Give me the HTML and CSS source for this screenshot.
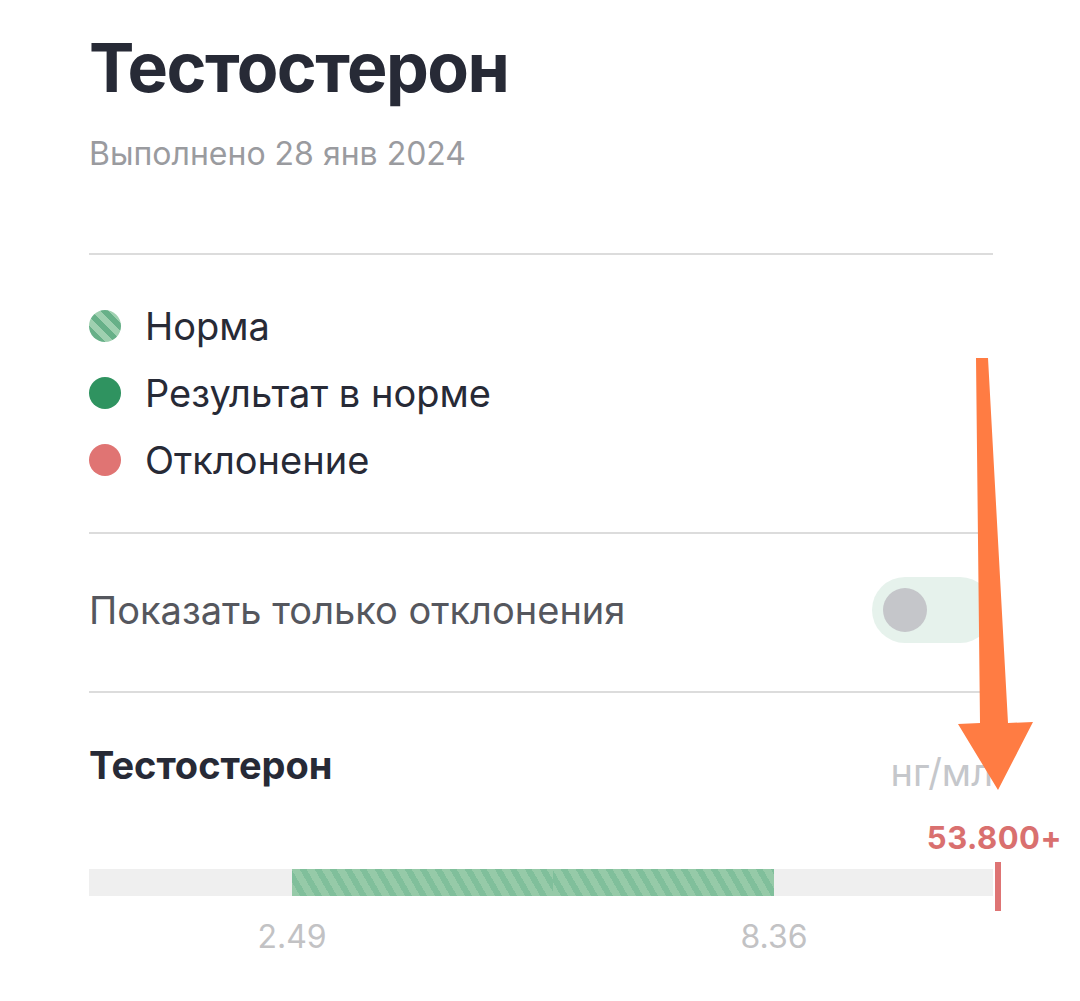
FILE: index.html
```html
<!DOCTYPE html>
<html lang="ru">
<head>
  <meta charset="UTF-8">
  <title>Тестостерон</title>
  <link rel="stylesheet" href="styles.css">
</head>
<body>
  <div class="page">
    <!-- заголовок -->
    <h1 class="title">Тестостерон</h1>
    <div class="date">Выполнено 28 янв 2024</div>

    <hr class="line">

    <!-- легенда -->
    <ul class="legend">
      <li><span class="dot dot-norm"></span>Норма</li>
      <li><span class="dot dot-ok"></span>Результат в норме</li>
      <li><span class="dot dot-bad"></span>Отклонение</li>
    </ul>

    <hr class="line">

    <!-- переключатель -->
    <div class="filter">
      <span>Показать только отклонения</span>
      <div class="switch"><div class="knob"></div></div>
    </div>

    <hr class="line">

    <!-- показатель -->
    <div class="result">
      <div class="result-head">
        <span class="result-name">Тестостерон</span>
        <span class="result-unit">нг/мл</span>
      </div>
      <div class="scale">
        <div class="value">53.800+</div>
        <div class="bar">
          <div class="range" style="left:22.46%;width:28.87%"></div>
          <div class="range" style="left:51.33%;width:24.45%"></div>
          <div class="marker"></div>
        </div>
        <div class="ticks">
          <span style="left:22.46%">2.49</span>
          <span style="left:75.78%">8.36</span>
        </div>
      </div>
    </div>

    <!-- стрелка поверх -->
    <svg class="arrow" width="1080" height="1001" viewBox="0 0 1080 1001">
      <polygon points="976,358 988,358 1008,723 1033,722 998,790 958,724 980,723" fill="#ff7c43"/>
    </svg>
  </div>
</body>
</html>
```
FILE: styles.css
```css
body {
  margin: 0;
  padding: 0;
  background: #fff;
  font-family: Inter, "Noto Sans", sans-serif;
  color: #272a36;
  overflow: hidden;
}
.page {
  position: relative;
  width: 904px;
  padding: 23px 0 0 89px;
}
.title {
  margin: 0;
  font-size: 68px;
  font-weight: 700;
  line-height: 88px;
  letter-spacing: -1.5px;
}
.date {
  margin-top: 23px;
  font-size: 32px;
  line-height: 40px;
  color: #9a9b9f;
}
.line {
  border: none;
  border-top: 2px solid #dcdcdc;
  margin: 0;
}
.date + .line {
  margin-top: 79px;
}
.legend {
  list-style: none;
  margin: 0;
  padding: 37px 0 39px;
}
.legend li {
  display: flex;
  align-items: center;
  height: 67px;
  font-size: 38px;
}
.dot {
  width: 32px;
  height: 32px;
  border-radius: 50%;
  margin-right: 24px;
}
.dot-norm {
  background: repeating-linear-gradient(45deg, #9fd0b0 0 6px, #67b088 6px 12px);
}
.dot-ok {
  background: #2f9360;
}
.dot-bad {
  background: #e07473;
}
.filter {
  display: flex;
  justify-content: space-between;
  align-items: center;
  height: 152px;
  font-size: 38px;
  color: #55575e;
}
.switch {
  width: 121px;
  height: 66px;
  border-radius: 33px;
  background: #e6f2ec;
  display: flex;
  align-items: center;
  padding-left: 11px;
  box-sizing: border-box;
}
.knob {
  width: 44px;
  height: 44px;
  border-radius: 50%;
  background: #c5c6ca;
}
.filter + .line {
  margin-top: 5px;
}
.result-head {
  display: flex;
  justify-content: space-between;
  align-items: baseline;
  margin-top: 49px;
}
.result-name {
  font-size: 38px;
  font-weight: 700;
}
.result-unit {
  font-size: 38px;
  color: #c5c7cb;
  position: relative;
  top: 7px;
}
.scale {
  position: relative;
  margin-top: 32px;
}
.value {
  text-align: right;
  margin-right: -69px;
  font-size: 31px;
  font-weight: 700;
  color: #d9706f;
  letter-spacing: 0.5px;
  line-height: 36px;
}
.bar {
  position: relative;
  height: 27px;
  margin-top: 13px;
  background: #efefef;
}
.range {
  position: absolute;
  top: 0;
  bottom: 0;
  background: repeating-linear-gradient(60deg, #96caa8 0 7px, #80bf9b 7px 13px);
}
.marker {
  position: absolute;
  left: 906px;
  top: -7px;
  width: 6px;
  height: 49px;
  background: #de7474;
}
.ticks {
  position: relative;
  height: 60px;
}
.ticks span {
  position: absolute;
  top: 21px;
  transform: translateX(-50%);
  font-size: 32px;
  color: #c2c2c4;
}
.arrow {
  position: absolute;
  left: 0;
  top: 0;
}
```
